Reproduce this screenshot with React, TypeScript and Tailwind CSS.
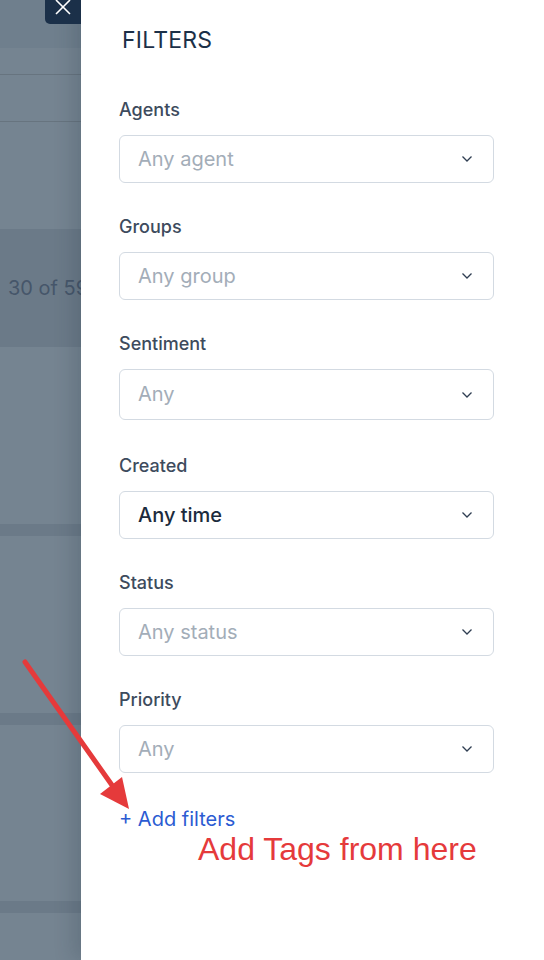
import React from "react";

const font = { fontFamily: "Inter, 'Noto Sans', sans-serif" };

function Chevron() {
  return (
    <svg width="12" height="8" viewBox="0 0 12 8" className="shrink-0">
      <path d="M1.5 1.5 L6 6 L10.5 1.5" fill="none" stroke="#2f3e52" strokeWidth="1.3" />
    </svg>
  );
}

function Field({ label, value, filled, tall }: { label: string; value: string; filled?: boolean; tall?: boolean }) {
  return (
    <div className="flex flex-col">
      <div className="h-6 leading-6 text-[18px] font-medium text-[#3d4b5d]">{label}</div>
      <div
        className={`mt-[13px] flex items-center justify-between rounded-[6px] border border-[#d3dae2] bg-white pl-[18px] pr-[20px] ${
          tall ? "h-[51px]" : "h-[48px]"
        }`}
      >
        <span
          className={`-mt-px text-[20px] ${filled ? "font-medium text-[#1c2b3d]" : "text-[#a3adb8]"}`}
        >
          {value}
        </span>
        <Chevron />
      </div>
    </div>
  );
}

export default function App() {
  return (
    <div className="relative flex h-[960px] w-[544px] overflow-hidden bg-white" style={font}>
      {/* background page (dimmed) */}
      <div className="flex w-[81px] shrink-0 flex-col bg-[#758491]">
        <div className="h-[48px] bg-[#6f7f8d]" />
        <div className="h-[26px]" />
        <div className="h-px bg-[#67747f]" />
        <div className="h-[46px]" />
        <div className="h-px bg-[#67747f]" />
        <div className="h-[107px]" />
        <div className="flex h-[118px] items-center overflow-hidden whitespace-nowrap bg-[#6b7a88] pl-[8px] text-[20px] text-[#46566a]">
          30 of 59
        </div>
        <div className="h-[177px]" />
        <div className="h-[12px] bg-[#6b7a88]" />
        <div className="h-[177px]" />
        <div className="h-[12px] bg-[#6b7a88]" />
        <div className="h-[176px]" />
        <div className="h-[12px] bg-[#6b7a88]" />
        <div className="flex-1" />
      </div>

      {/* filters panel */}
      <div className="relative flex flex-1 flex-col bg-white pl-[38px] pr-[50px] shadow-[-8px_0_18px_rgba(30,45,60,0.18)]">
        <div className="mt-[26px] h-7 pl-[3px] leading-7 text-[23px] tracking-[0.2px] text-[#1c3048]">FILTERS</div>
        <div className="mt-[44px] flex flex-col gap-[32px]">
          <Field label="Agents" value="Any agent" />
          <Field label="Groups" value="Any group" />
          <div className="mb-[2px]">
            <Field label="Sentiment" value="Any" tall />
          </div>
          <Field label="Created" value="Any time" filled />
          <Field label="Status" value="Any status" />
          <Field label="Priority" value="Any" />
        </div>
        <div className="mt-[34px] h-6 leading-6 text-[20px] text-[#2b5bd2]">+ Add filters</div>
        <div
          className="ml-[79px] mt-0 text-[32px] leading-9 text-[#e53a3b]"
          style={{ fontFamily: "'Liberation Sans', Arial, sans-serif" }}
        >
          Add Tags from here
        </div>
      </div>

      {/* close button */}
      <div className="absolute left-[45px] top-0 flex h-[24px] w-[36px] items-center justify-center rounded-bl-[5px] bg-[#1b3049]">
        <svg width="18" height="18" viewBox="0 0 18 18" className="-mt-[10px]">
          <path d="M2 2 L16 16 M16 2 L2 16" stroke="#ffffff" strokeWidth="1.6" />
        </svg>
      </div>

      {/* annotation arrow */}
      <svg className="pointer-events-none absolute left-0 top-0" width="544" height="960">
        <line x1="25" y1="662" x2="114" y2="788" stroke="#e53a3b" strokeWidth="5" strokeLinecap="round" />
        <polygon points="129,809 100,794 122,777" fill="#e53a3b" />
      </svg>
    </div>
  );
}
